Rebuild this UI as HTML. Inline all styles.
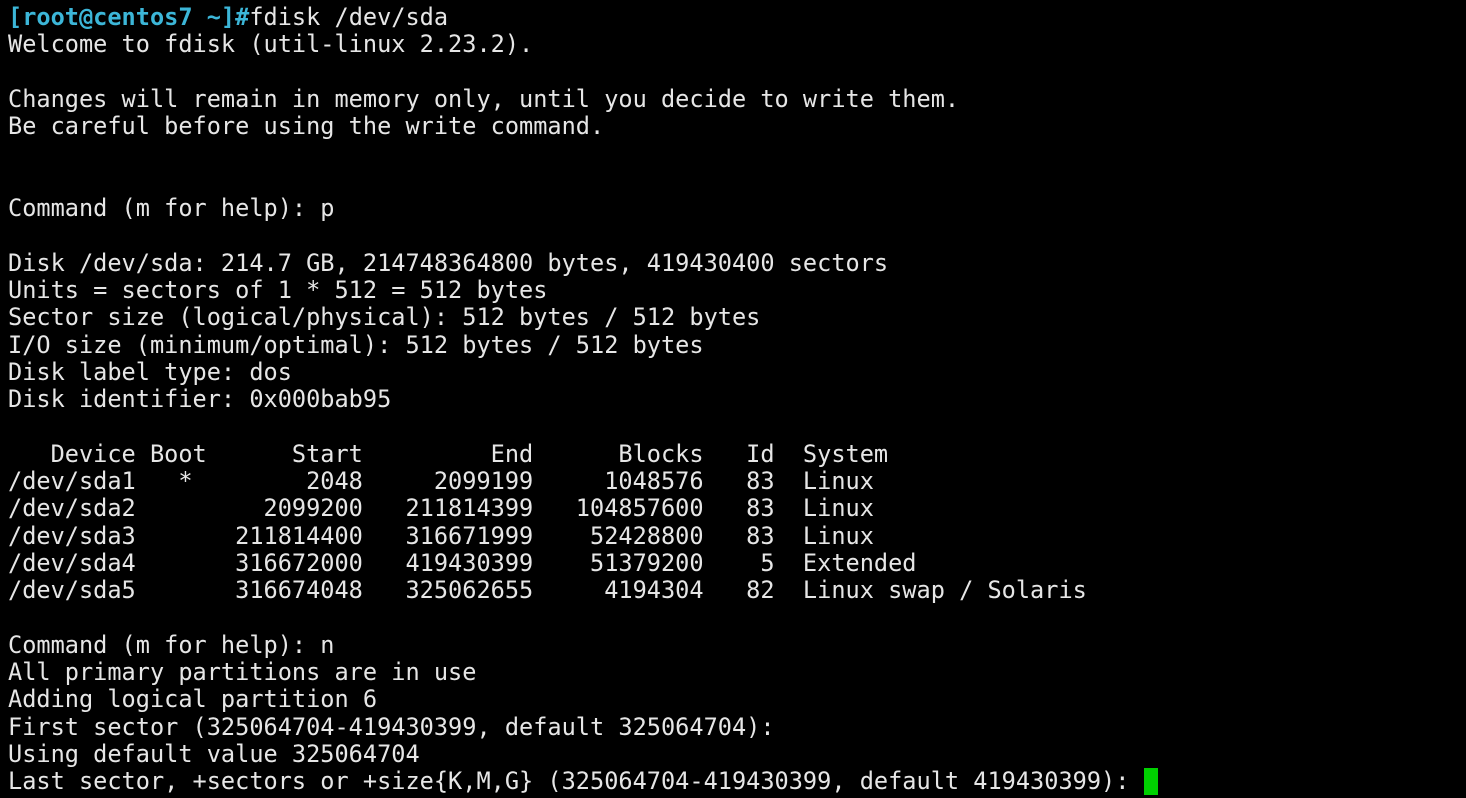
<!DOCTYPE html>
<html><head><meta charset="utf-8"><style>
html,body{margin:0;padding:0;background:#000;width:1466px;height:798px;overflow:hidden}
pre{margin:0;position:absolute;left:8px;top:4px;font-family:"DejaVu Sans Mono","Liberation Mono",monospace;font-size:23.58px;line-height:27.3px;color:#e6e6e6}
.p{color:#3cb6d8;font-weight:bold}
.c{display:inline-block;width:14px;height:27px;background:#00d000;vertical-align:top}
</style></head><body><pre><span class="p">[root@centos7 ~]#</span>fdisk /dev/sda
Welcome to fdisk (util-linux 2.23.2).

Changes will remain in memory only, until you decide to write them.
Be careful before using the write command.


Command (m for help): p

Disk /dev/sda: 214.7 GB, 214748364800 bytes, 419430400 sectors
Units = sectors of 1 * 512 = 512 bytes
Sector size (logical/physical): 512 bytes / 512 bytes
I/O size (minimum/optimal): 512 bytes / 512 bytes
Disk label type: dos
Disk identifier: 0x000bab95

   Device Boot      Start         End      Blocks   Id  System
/dev/sda1   *        2048     2099199     1048576   83  Linux
/dev/sda2         2099200   211814399   104857600   83  Linux
/dev/sda3       211814400   316671999    52428800   83  Linux
/dev/sda4       316672000   419430399    51379200    5  Extended
/dev/sda5       316674048   325062655     4194304   82  Linux swap / Solaris

Command (m for help): n
All primary partitions are in use
Adding logical partition 6
First sector (325064704-419430399, default 325064704):
Using default value 325064704
Last sector, +sectors or +size{K,M,G} (325064704-419430399, default 419430399): <span class="c"></span></pre></body></html>
